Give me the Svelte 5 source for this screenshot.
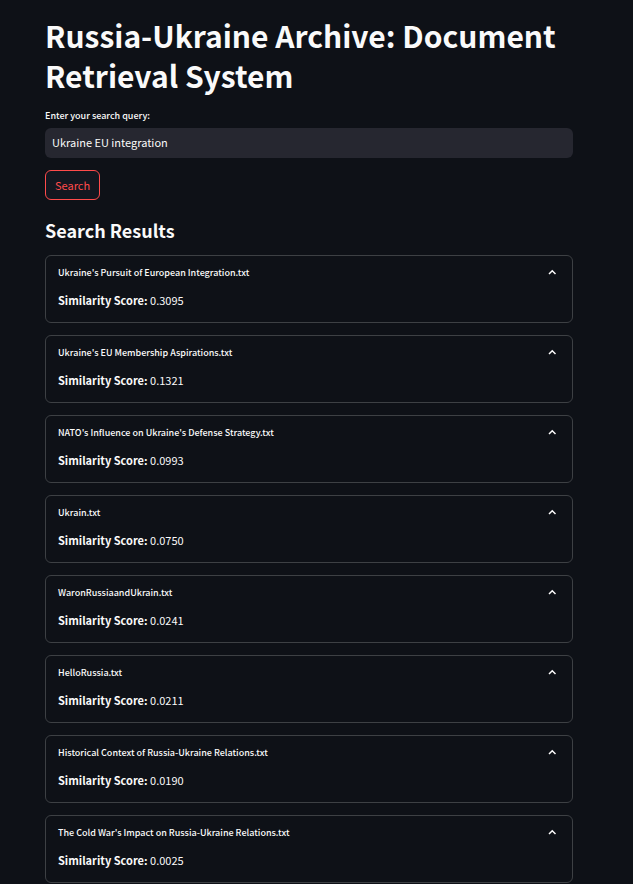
<script>
  let query = $state('Ukraine EU integration');

  const results = [
    { name: "Ukraine's Pursuit of European Integration.txt", score: '0.3095' },
    { name: "Ukraine's EU Membership Aspirations.txt", score: '0.1321' },
    { name: "NATO's Influence on Ukraine's Defense Strategy.txt", score: '0.0993' },
    { name: 'Ukrain.txt', score: '0.0750' },
    { name: 'WaronRussiaandUkrain.txt', score: '0.0241' },
    { name: 'HelloRussia.txt', score: '0.0211' },
    { name: 'Historical Context of Russia-Ukraine Relations.txt', score: '0.0190' },
    { name: "The Cold War's Impact on Russia-Ukraine Relations.txt", score: '0.0025' }
  ];
</script>

<main>
  <h1>Russia-Ukraine Archive: Document Retrieval System</h1>

  <form onsubmit={(event) => event.preventDefault()}>
    <label for="query">Enter your search query:</label>
    <input id="query" type="text" bind:value={query} />
    <button type="submit">Search</button>
  </form>

  <h2>Search Results</h2>

  <div class="results">
    {#each results as result (result.name)}
      <details open>
        <summary>
          <span>{result.name}</span>
          <svg viewBox="0 0 12 12" aria-hidden="true">
            <path d="M3 7l3.25-3.25L9.5 7" />
          </svg>
        </summary>
        <p><strong>Similarity Score:</strong> {result.score}</p>
      </details>
    {/each}
  </div>
</main>

<style>
  :global(body) {
    margin: 0;
    background: #0e1117;
  }

  main {
    box-sizing: border-box;
    padding: 15px 60px 1px 45px;
    color: #fafafa;
    font-family: 'Source Sans Pro', 'Noto Sans CJK SC', sans-serif;
    font-size: 11px;
    line-height: 20px;
  }

  h1 {
    margin: 0;
    font-size: 30px;
    font-weight: 700;
    line-height: 40px;
  }

  form {
    display: flex;
    flex-direction: column;
    align-items: flex-start;
    padding-top: 11px;
  }

  label {
    margin-bottom: 2px;
    font-size: 9px;
    font-weight: 500;
  }

  input {
    box-sizing: border-box;
    width: 100%;
    height: 30px;
    padding: 0 7px 2px;
    border: 0;
    border-radius: 6px;
    outline: 0;
    background: #262730;
    color: inherit;
    font: inherit;
  }

  button {
    box-sizing: border-box;
    height: 30px;
    margin-top: 12px;
    padding: 0 9px;
    border: 1px solid #ff4b4b;
    border-radius: 6px;
    background: #131720;
    color: #ff4b4b;
    font: inherit;
    cursor: pointer;
  }

  h2 {
    margin: 0;
    padding: 18px 0 12px;
    font-size: 18px;
    font-weight: 600;
    line-height: 25px;
  }

  .results {
    display: flex;
    flex-direction: column;
    gap: 12px;
  }

  details {
    border: 1px solid #3d4044;
    border-radius: 6px;
    padding: 7px 12px 12px;
  }

  summary {
    display: flex;
    align-items: center;
    justify-content: space-between;
    padding-right: 2px;
    font-size: 9px;
    font-weight: 500;
    list-style: none;
    cursor: pointer;
  }

  summary svg {
    width: 12px;
    height: 12px;
    fill: none;
    stroke: currentColor;
    stroke-width: 1.5;
  }

  p {
    margin: 7px 0 0;
  }
</style>
